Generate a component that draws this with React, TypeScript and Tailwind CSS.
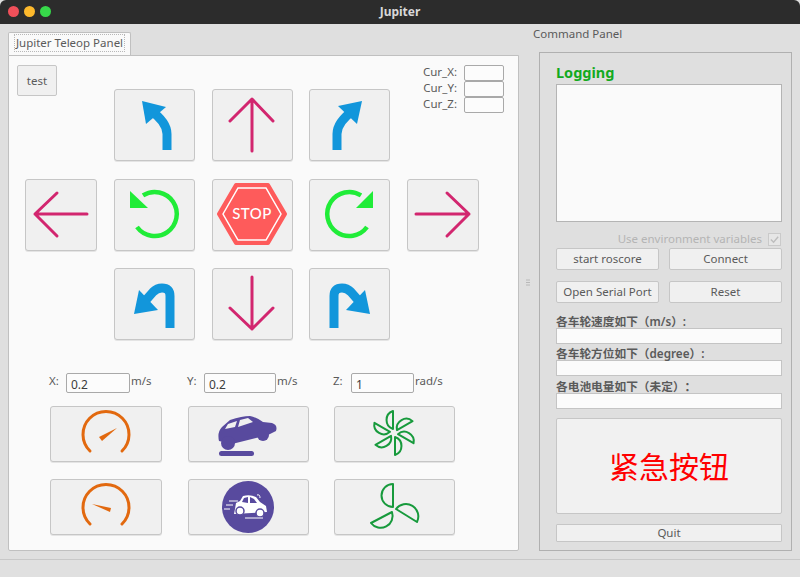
const font = { fontFamily: '"Noto Sans", "Noto Sans CJK SC", sans-serif' };

function IconButton({
  x,
  y,
  w,
  h,
  className,
  children,
}: {
  x: number;
  y: number;
  w: number;
  h: number;
  className?: string;
  children: React.ReactNode;
}) {
  // viewBox follows screen coordinates so the drawings line up with the page
  return (
    <button
      className={`block rounded-[3px] border border-[#c6c6c6] bg-[#f0f0f0] shadow-[0_1px_0_#e4e4e4] ${className ?? ""}`}
      style={{ width: w, height: h }}
    >
      <svg
        viewBox={`${x + 1} ${y + 1} ${w - 2} ${h - 2}`}
        className="block h-full w-full"
      >
        {children}
      </svg>
    </button>
  );
}

function PinkArrow({ d }: { d: string }) {
  return (
    <path
      d={d}
      fill="none"
      stroke="#d2266f"
      strokeWidth="3"
      strokeLinecap="round"
      strokeLinejoin="round"
    />
  );
}

function BlueTurn({ d, head }: { d: string; head: string }) {
  return (
    <>
      <path d={d} fill="none" stroke="#1296db" strokeWidth="9" />
      <polygon points={head} fill="#1296db" />
    </>
  );
}

function Gauge({ cy, needle }: { cy: number; needle: string }) {
  return (
    <>
      <path
        d={`M90 ${cy + 18} A23 23 0 1 1 122 ${cy + 18}`}
        fill="none"
        stroke="#e2690f"
        strokeWidth="3"
        strokeLinecap="round"
      />
      <polygon points={needle} fill="#e2690f" />
    </>
  );
}

function Blade({ d }: { d: string }) {
  return (
    <path
      d={d}
      fill="none"
      stroke="#179a3c"
      strokeWidth="2"
      strokeLinejoin="round"
    />
  );
}

function ParamLabel({ children, className }: { children: React.ReactNode; className: string }) {
  return <div className={`text-[11.5px] leading-[16px] ${className}`}>{children}</div>;
}

function ParamInput({ value, width }: { value: string; width: string }) {
  return (
    <div
      className={`${width} h-[20px] rounded-[2px] border border-[#a9a9a9] bg-[#fcfcfc] pl-[4px] text-[12px] leading-[21px] text-[#3c3c3c]`}
    >
      {value}
    </div>
  );
}

function TeleopPanel() {
  return (
    <div className="h-[496px] rounded-b-[2px] border border-[#c0c0c0] bg-[#fafafa]">
      <div className="flex h-[33px] items-start justify-between pl-[8px] pr-[14px] pt-[9px]">
        <button className="h-[31px] w-[40px] shrink-0 rounded-[2px] border border-[#c6c6c6] bg-[#f0f0f0] text-[11.5px]">
          test
        </button>
        <div className="flex flex-col">
          {["Cur_X:", "Cur_Y:", "Cur_Z:"].map((label) => (
            <div key={label} className="flex h-[16px] items-center justify-end">
              <span className="mr-[7px] pb-[2px] text-[11.5px] leading-[14px]">{label}</span>
              <div className="h-[15.5px] w-[40px] rounded-[2px] border border-[#a9a9a9] bg-[#fcfcfc]" />
            </div>
          ))}
        </div>
      </div>

      <div className="grid grid-cols-[89px_98px_97px_98px_72px] grid-rows-[90px_89px_72px] pl-[16px]">
        <IconButton x={114} y={89} w={81} h={72} className="col-start-2 row-start-1">
          <BlueTurn d="M167 150 V134 Q167 122 150 110" head="142,101 166,107 146,124" />
        </IconButton>
        <IconButton x={212} y={89} w={81} h={72} className="col-start-3 row-start-1">
          <PinkArrow d="M252 151 V99 M230 121 L252 99 L273 121" />
        </IconButton>
        <IconButton x={309} y={89} w={81} h={72} className="col-start-4 row-start-1">
          <BlueTurn d="M337 150 V134 Q337 122 354 110" head="362,101 338,106 357,124" />
        </IconButton>

        <IconButton x={25} y={179} w={72} h={72} className="col-start-1 row-start-2">
          <PinkArrow d="M87 214 H35 M57 193 L35 214 L57 236" />
        </IconButton>
        <IconButton x={114} y={179} w={81} h={72} className="col-start-2 row-start-2">
          <path d="M137 227 A22 22 0 1 0 143 195.4" fill="none" stroke="#20ec38" strokeWidth="4.5" />
          <polygon points="130,191 130,208 148,208" fill="#20ec38" />
        </IconButton>
        <IconButton x={212} y={179} w={81} h={72} className="col-start-3 row-start-2">
          <polygon
            points="219,214 236,185 268,185 285,214 268,243 236,243"
            fill="#fe5b5b"
            stroke="#fe5b5b"
            strokeWidth="4"
            strokeLinejoin="round"
          />
          <polygon
            points="223,214 238,188 266,188 281,214 266,240 238,240"
            fill="none"
            stroke="#ffffff"
            strokeWidth="1.5"
          />
          <text
            x="252"
            y="219"
            textAnchor="middle"
            fill="#ffffff"
            fontSize="15"
            fontWeight="500"
            fontFamily="Lato, sans-serif"
            letterSpacing="0.5"
          >
            STOP
          </text>
        </IconButton>
        <IconButton x={309} y={179} w={81} h={72} className="col-start-4 row-start-2">
          <path d="M367 227 A22 22 0 1 1 361 195.4" fill="none" stroke="#20ec38" strokeWidth="4.5" />
          <polygon points="373,191 373,208 356,208" fill="#20ec38" />
        </IconButton>
        <IconButton x={407} y={179} w={72} h={72} className="col-start-5 row-start-2">
          <PinkArrow d="M416 214 H469 M447 193 L469 214 L447 236" />
        </IconButton>

        <IconButton x={114} y={268} w={81} h={72} className="col-start-2 row-start-3">
          <BlueTurn
            d="M170 328 V296 Q170 288 162 288 Q157 288 153 292 L146 300"
            head="134,314 139,290 158,310"
          />
        </IconButton>
        <IconButton x={212} y={268} w={81} h={72} className="col-start-3 row-start-3">
          <PinkArrow d="M252 277 V329 M230 308 L252 329 L273 308" />
        </IconButton>
        <IconButton x={309} y={268} w={81} h={72} className="col-start-4 row-start-3">
          <BlueTurn
            d="M334 328 V296 Q334 288 342 288 Q347 288 351 292 L358 300"
            head="370,314 365,290 346,310"
          />
        </IconButton>
      </div>

      <div className="ml-[40px] mt-[33px] grid h-[20px] grid-cols-[138px_146px_1fr]">
        <div className="flex">
          <ParamLabel className="w-[17px]">X:</ParamLabel>
          <ParamInput value="0.2" width="w-[64px]" />
          <ParamLabel className="ml-px">m/s</ParamLabel>
        </div>
        <div className="flex">
          <ParamLabel className="w-[17px]">Y:</ParamLabel>
          <ParamInput value="0.2" width="w-[72px]" />
          <ParamLabel className="ml-px">m/s</ParamLabel>
        </div>
        <div className="flex">
          <ParamLabel className="w-[18px]">Z:</ParamLabel>
          <ParamInput value="1" width="w-[63px]" />
          <ParamLabel className="ml-px">rad/s</ParamLabel>
        </div>
      </div>

      <div className="ml-[41px] mt-[13px] grid grid-cols-[138px_146px_1fr] grid-rows-[73px_56px]">
        <IconButton x={50} y={406} w={112} h={56}>
          <Gauge cy={433} needle="99,437 117,428 102,441" />
        </IconButton>
        <IconButton x={188} y={406} w={121} h={56}>
          <path
            d="M219 441 Q217 432 222 427 L230 420 Q242 416 250 416 Q256 417 263 422 L272 423 Q278 425 276 431 L268 435 L232 444 Z"
            fill="#584a9e"
          />
          <circle cx="228" cy="443" r="7" fill="#584a9e" />
          <circle cx="263" cy="435" r="6" fill="#584a9e" />
          <polygon points="225,429 228,424 237,421 235,427" fill="#f0f0f0" />
          <polygon points="238,427 240,420 248,418 253,422" fill="#f0f0f0" />
          <rect x="219" y="451" width="35" height="5" rx="2.5" fill="#584a9e" />
        </IconButton>
        <IconButton x={334} y={406} w={121} h={56}>
          {[0, 60, 120, 180, 240, 300].map((angle) => (
            <g key={angle} transform={`translate(394 433) rotate(${angle})`}>
              <Blade d="M-1 -4 V-22 A9.5 9.5 0 0 0 -1 -4 Z" />
            </g>
          ))}
        </IconButton>
        <IconButton x={50} y={479} w={112} h={56}>
          <Gauge cy={506} needle="92,504 111,508 110,512" />
        </IconButton>
        <IconButton x={188} y={479} w={121} h={56}>
          <circle cx="248" cy="507" r="26" fill="#584a9e" />
          <path
            d="M235 509 L236 503 L240 501 L243 496 Q250 494 256 497 L260 502 L266 506 L267 512 L234 514 Z"
            fill="#ffffff"
          />
          <polygon points="242,502 244,498 248,497 248,503" fill="#584a9e" />
          <polygon points="250,497 254,499 257,503 250,503" fill="#584a9e" />
          <circle cx="240" cy="511" r="4" fill="#ffffff" stroke="#584a9e" strokeWidth="1.5" />
          <circle cx="260" cy="513" r="4" fill="#ffffff" stroke="#584a9e" strokeWidth="1.5" />
          <path
            d="M229 501 H238 M226 505 H233 M224 509 H230 M245 518 H263 M257 495 Q260 494 260 498"
            stroke="#ffffff"
            strokeWidth="1"
            fill="none"
          />
        </IconButton>
        <IconButton x={334} y={479} w={121} h={56}>
          <Blade d="M393 507 V484 A11.5 11.5 0 0 0 393 507 Z" />
          <Blade d="M396 509 L417 522 A12.4 12.4 0 0 0 396 509 Z" />
          <Blade d="M392 512 L371 523 A12 12 0 0 0 392 512 Z" />
        </IconButton>
      </div>
    </div>
  );
}

function PanelButton({ label }: { label: string }) {
  return (
    <button className="h-[22px] rounded-[2px] border border-[#c6c6c6] bg-[#f0f0f0] text-[11.5px]">
      {label}
    </button>
  );
}

function ReadoutLabel({ label, height }: { label: string; height: string }) {
  return (
    <div className={`flex items-end whitespace-pre text-[11.7px] font-semibold leading-[14px] [text-spacing-trim:space-all] ${height}`}>
      {label}
    </div>
  );
}

function Readout() {
  return <div className="h-[16px] border border-[#c4c4c4] bg-[#fbfbfb]" />;
}

function CommandPanel() {
  return (
    <div className="ml-[6px] h-[499px] border border-[#b0b0b0] bg-[#dfdfdf] pl-[16px] pr-[9px] pt-[9px]">
      <div className="h-[22px] text-[14.5px] font-bold leading-[20px] text-[#12aa1e]">
        Logging
      </div>
      <div className="h-[138px] border border-[#b4b4b4] bg-[#fafafa]" />
      <div className="mt-[10px] flex h-[14px] items-center justify-end pr-px text-[11.5px] text-[#b4b4b4]">
        <span>Use environment variables</span>
        <div className="ml-[6px] flex h-[13px] w-[13px] items-center justify-center border border-[#cacaca] bg-[#e6e6e6]">
          <svg viewBox="0 0 12 12" className="h-[11px] w-[11px]">
            <path d="M2 6 L5 9 L10 3" fill="none" stroke="#bdbdbd" strokeWidth="1.5" />
          </svg>
        </div>
      </div>
      <div className="mt-[2px] grid grid-cols-[103px_113px] justify-between">
        <PanelButton label="start roscore" />
        <PanelButton label="Connect" />
      </div>
      <div className="mt-[11px] grid grid-cols-[103px_113px] justify-between">
        <PanelButton label="Open Serial Port" />
        <PanelButton label="Reset" />
      </div>
      <ReadoutLabel label="各车轮速度如下（m/s）:" height="h-[25px]" />
      <Readout />
      <ReadoutLabel label="各车轮方位如下（degree）:" height="h-[16px]" />
      <Readout />
      <ReadoutLabel label="各电池电量如下（未定）：" height="h-[17px]" />
      <Readout />
      <button className="mt-[9px] h-[96px] w-full rounded-[2px] border border-[#c6c6c6] bg-[#f1f1f1] pt-[2px] text-[30px] leading-none text-[#ff0000]">
        紧急按钮
      </button>
      <button className="mt-[10px] h-[18px] w-full rounded-[1px] border border-[#c6c6c6] bg-[#f0f0f0] text-[11.5px] leading-none">
        Quit
      </button>
    </div>
  );
}

export default function App() {
  return (
    <div
      className="flex h-[577px] w-[800px] flex-col overflow-hidden bg-[#dfdfdf] text-[#5a5a5a]"
      style={font}
    >
      <div className="relative flex h-[24px] shrink-0 items-center justify-center rounded-t-[6px] bg-[#2c2c2c] text-[12px] font-bold text-[#d8d8d8]">
        <div className="absolute left-[8px] top-[6px] flex gap-[5px]">
          <span className="h-[11px] w-[11px] rounded-full bg-[#f0505a]" />
          <span className="h-[11px] w-[11px] rounded-full bg-[#fdb92c]" />
          <span className="h-[11px] w-[11px] rounded-full bg-[#37d84a]" />
        </div>
        Jupiter
      </div>

      <div className="flex h-[527px] shrink-0">
        <div className="ml-[8px] w-[511px] pt-[8px]">
          <div className="flex h-[23px] w-[123px] items-center justify-center rounded-t-[2px] border border-b-0 border-[#c0c0c0] bg-[#fafafa] pb-[2px] text-[11.5px]">
            <span className="outline-1 -outline-offset-1 outline-dotted outline-[#b8b8b8] px-[2px]">
              Jupiter Teleop Panel
            </span>
          </div>
          <TeleopPanel />
        </div>
        <div className="flex w-[14px] items-center justify-end pb-[18px] pr-[3px] pt-[8px]">
          <svg viewBox="0 0 4 7" className="h-[7px] w-[4px]">
            <path d="M0 1 H4 M0 3.5 H4 M0 6 H4" stroke="#b8b8b8" strokeWidth="1" />
          </svg>
        </div>
        <div className="w-[259px]">
          <div className="h-[28px] text-[11.5px] leading-[20px]">Command Panel</div>
          <CommandPanel />
        </div>
      </div>

      <div className="mt-[8px] grow border-t border-[#c8c8c8] bg-[#e0e0e0]" />
    </div>
  );
}
